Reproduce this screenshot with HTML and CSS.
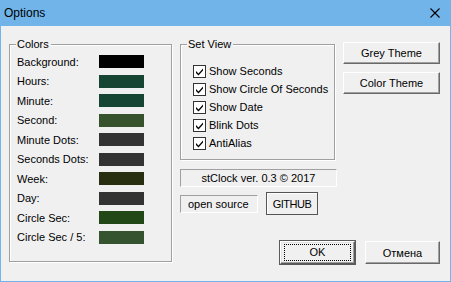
FILE: index.html
```html
<!DOCTYPE html>
<html lang="ru">
<head>
  <meta charset="UTF-8">
  <title>Options</title>
  <link rel="stylesheet" href="styles.css">
</head>
<body>
  <div class="window">

    <!-- заголовок окна -->
    <div class="titlebar">
      <span class="caption">Options</span>
      <svg class="close" width="10" height="10" viewBox="0 0 10 10">
        <path d="M0.5 0.5 L9.5 9.5 M9.5 0.5 L0.5 9.5" stroke="#000" stroke-width="1.1" fill="none"/>
      </svg>
    </div>

    <div class="content">

      <!-- цвета -->
      <div class="group colors">
        <span class="group-title">Colors</span>
        <div class="color-row"><span class="label">Background:</span><span class="swatch c-bg"></span></div>
        <div class="color-row"><span class="label">Hours:</span><span class="swatch c-hours"></span></div>
        <div class="color-row"><span class="label">Minute:</span><span class="swatch c-minute"></span></div>
        <div class="color-row"><span class="label">Second:</span><span class="swatch c-second"></span></div>
        <div class="color-row"><span class="label">Minute Dots:</span><span class="swatch c-gray"></span></div>
        <div class="color-row"><span class="label">Seconds Dots:</span><span class="swatch c-gray"></span></div>
        <div class="color-row"><span class="label">Week:</span><span class="swatch c-week"></span></div>
        <div class="color-row"><span class="label">Day:</span><span class="swatch c-gray"></span></div>
        <div class="color-row"><span class="label">Circle Sec:</span><span class="swatch c-circle"></span></div>
        <div class="color-row"><span class="label">Circle Sec / 5:</span><span class="swatch c-circle5"></span></div>
      </div>

      <div class="side">
        <div class="top-row">

          <!-- вид -->
          <div class="group view">
            <span class="group-title">Set View</span>
            <label class="check-row"><span class="checkbox"><svg width="11" height="11" viewBox="0 0 11 11"><path d="M2 5 L4.5 7.5 L9 2.5 L9 4.5 L4.5 9.5 L2 7 Z" fill="#000"/></svg></span>Show Seconds</label>
            <label class="check-row"><span class="checkbox"><svg width="11" height="11" viewBox="0 0 11 11"><path d="M2 5 L4.5 7.5 L9 2.5 L9 4.5 L4.5 9.5 L2 7 Z" fill="#000"/></svg></span>Show Circle Of Seconds</label>
            <label class="check-row"><span class="checkbox"><svg width="11" height="11" viewBox="0 0 11 11"><path d="M2 5 L4.5 7.5 L9 2.5 L9 4.5 L4.5 9.5 L2 7 Z" fill="#000"/></svg></span>Show Date</label>
            <label class="check-row"><span class="checkbox"><svg width="11" height="11" viewBox="0 0 11 11"><path d="M2 5 L4.5 7.5 L9 2.5 L9 4.5 L4.5 9.5 L2 7 Z" fill="#000"/></svg></span>Blink Dots</label>
            <label class="check-row"><span class="checkbox"><svg width="11" height="11" viewBox="0 0 11 11"><path d="M2 5 L4.5 7.5 L9 2.5 L9 4.5 L4.5 9.5 L2 7 Z" fill="#000"/></svg></span>AntiAlias</label>
          </div>

          <!-- темы -->
          <div class="themes">
            <button class="btn">Grey Theme</button>
            <button class="btn">Color Theme</button>
          </div>
        </div>

        <div class="static version">stClock ver. 0.3 © 2017</div>

        <div class="links">
          <div class="static source">open source</div>
          <button class="flat">GITHUB</button>
        </div>

        <div class="footer">
          <button class="btn default"><span class="focus">OK</span></button>
          <button class="btn cancel">Отмена</button>
        </div>
      </div>

    </div>
  </div>
</body>
</html>
```

FILE: styles.css
```css
/* окно */
body {
  margin: 0;
  background: #f0f0f0;
  font-family: 'Liberation Sans', Arial, sans-serif;
  font-size: 11px;
  color: #000;
}

.window {
  width: 451px;
  height: 282px;
  box-sizing: border-box;
  border: 1px solid #72b5ea;
  border-top: none;
  background: #f0f0f0;
}

.titlebar {
  height: 26px;
  margin: 0 -1px;
  background: #70b4e9;
  display: flex;
  align-items: center;
  justify-content: space-between;
  padding: 0 11px 0 4px;
}

.caption {
  font-size: 12px;
}

.close {
  display: block;
}

.content {
  display: flex;
  gap: 8px;
  padding: 18px 0 0 8px;
}

/* рамки групп */
.group {
  position: relative;
  box-sizing: border-box;
  border: 1px solid #a0a0a0;
  box-shadow: inset 1px 1px 0 #fff, 1px 1px 0 #fff;
}

.group-title {
  position: absolute;
  top: -8px;
  left: 6px;
  padding: 0 2px 0 1px;
  background: #f0f0f0;
  line-height: 14px;
}

.colors {
  width: 163px;
  height: 218px;
  padding: 7px 0 0 7px;
}

.color-row {
  height: 19.5px;
  display: flex;
  align-items: center;
}

.label {
  width: 82px;
}

.swatch {
  width: 45px;
  height: 13px;
}

.c-bg { background: #000000; }
.c-hours { background: #164533; }
.c-minute { background: #164533; }
.c-second { background: #36532d; }
.c-gray { background: #333333; }
.c-week { background: #282e10; }
.c-circle { background: #224817; }
.c-circle5 { background: #35532f; }

/* правая часть */
.side {
  width: 260px;
  display: flex;
  flex-direction: column;
}

.top-row {
  display: flex;
  gap: 8px;
}

.view {
  width: 155px;
  height: 116px;
  padding: 17px 0 0 12px;
}

.check-row {
  height: 18px;
  display: flex;
  align-items: center;
  gap: 3px;
}

.checkbox {
  width: 11px;
  height: 11px;
  border: 1px solid #333;
  background: #fff;
  display: flex;
}

.themes {
  display: flex;
  flex-direction: column;
  gap: 8px;
  margin-top: -2px;
}

.btn {
  font: inherit;
  color: #000;
  background: #f0f0f0;
  border: 1px solid;
  border-color: #fff #696969 #696969 #fff;
  box-shadow: inset -1px -1px 0 #a0a0a0;
  padding: 0;
  height: 22px;
  width: 97px;
}

.static {
  box-sizing: border-box;
  border: 1px solid;
  border-color: #a0a0a0 #fff #fff #a0a0a0;
  height: 18px;
  line-height: 16px;
}

.version {
  width: 157px;
  margin-top: 9px;
  text-align: center;
}

.links {
  display: flex;
  align-items: center;
  gap: 8px;
  margin-top: 5px;
}

.source {
  width: 78px;
  padding-left: 7px;
}

.flat {
  font: inherit;
  color: #000;
  background: #f0f0f0;
  border: 1px solid #555;
  box-shadow: inset 1px 1px 0 #fff;
  height: 23px;
  width: 52px;
  padding: 0;
  letter-spacing: -0.5px;
}

.footer {
  display: flex;
  justify-content: flex-end;
  gap: 10px;
  margin-top: 26px;
}

.footer .btn {
  height: 23px;
  width: 75px;
}

.default {
  outline: 1px solid #5a5a5a;
  outline-offset: 0;
  border-color: #fff #5a5a5a #5a5a5a #fff;
  box-shadow: inset -1px -1px 0 #a0a0a0, inset 1px 1px 0 #e3e3e3;
}

.focus {
  display: block;
  margin: 0 3px;
  height: 15px;
  line-height: 15px;
  border: 1px dotted #000;
}

.cancel {
  width: 76px;
}
```
